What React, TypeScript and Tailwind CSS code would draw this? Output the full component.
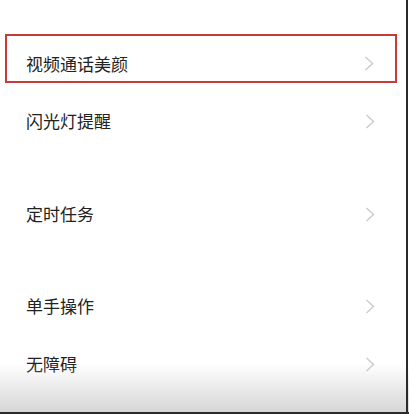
const FONT = '"Noto Sans CJK SC", "Noto Sans", sans-serif';

const Chevron = () => (
  <svg width="10" height="15" viewBox="0 0 10 15" className="shrink-0">
    <path d="M1.5 1 L8.5 7.5 L1.5 14" fill="none" stroke="#cdcdcd" strokeWidth="1.5" />
  </svg>
);

const Row = ({ label }: { label: string }) => (
  <div className="flex h-[58px] items-center justify-between pl-[26px] pr-[34px]">
    <span className="text-[17px] text-[#222]">{label}</span>
    <Chevron />
  </div>
);

export default function App() {
  return (
    <div className="relative h-[414px] w-[409px] overflow-hidden bg-white" style={{ fontFamily: FONT }}>
      <div className="pt-[34px]">
        <div className="ml-[5px] flex h-[49px] w-[392px] items-center justify-between border-2 border-[#c83a36] pl-[19px] pr-[21px] pt-[10px]">
          <span className="text-[17px] text-[#222]">视频通话美颜</span>
          <Chevron />
        </div>
        <div className="mt-[9px]">
          <Row label="闪光灯提醒" />
        </div>
        <div className="mt-[35px]">
          <Row label="定时任务" />
        </div>
        <div className="mt-[34px]">
          <Row label="单手操作" />
          <Row label="无障碍" />
        </div>
      </div>
      {/* bottom shade */}
      <div className="pointer-events-none absolute inset-x-0 bottom-0 h-[50px] bg-gradient-to-b from-white/0 to-[#d4d4d4]" />
      <div className="absolute inset-x-0 bottom-0 h-[2px] bg-[#2a2a2a]" />
      <div className="absolute bottom-0 right-[1px] top-0 w-[2px] bg-[#2a2a2a]" />
    </div>
  );
}
